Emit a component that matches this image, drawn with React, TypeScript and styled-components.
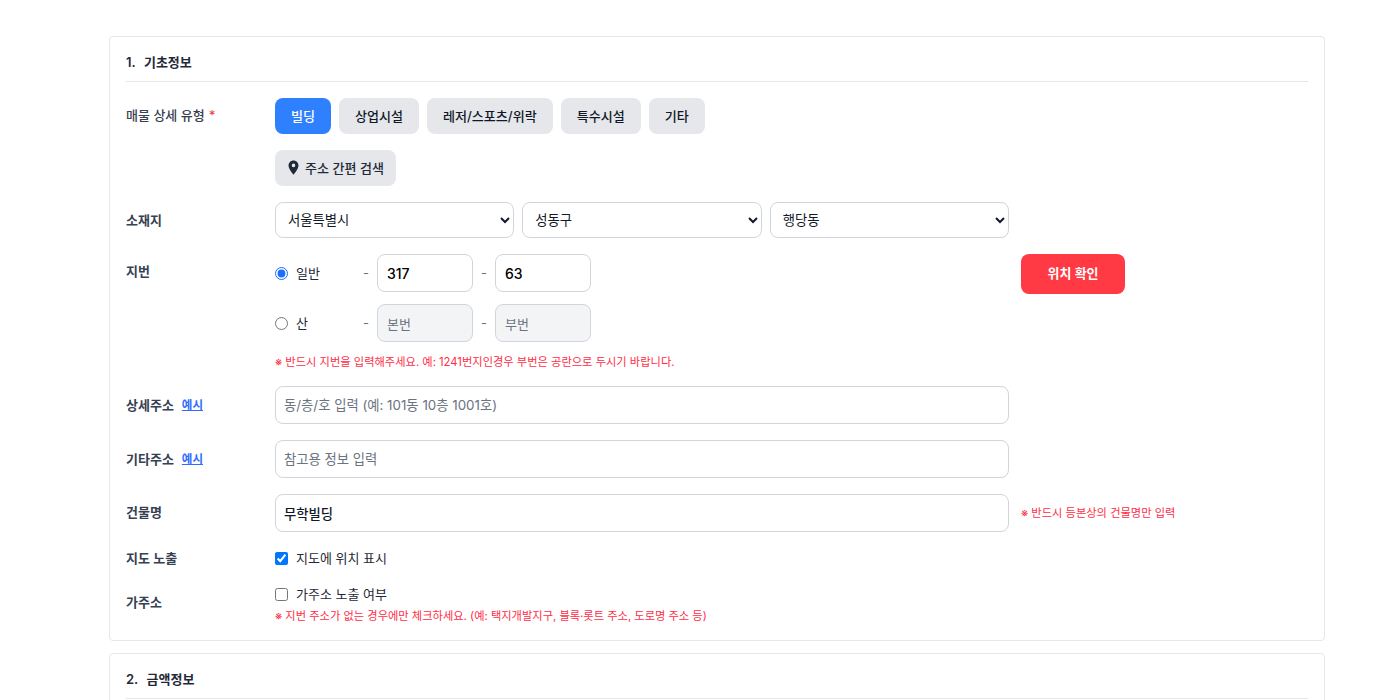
import styled, { createGlobalStyle } from 'styled-components';
import { MdLocationOn } from 'react-icons/md';

const GlobalStyle = createGlobalStyle`
    html, body {
        margin: 0;
        padding: 0;
        height: 700px;
        overflow: hidden;
        background: #fff;
    }
    * {
        box-sizing: border-box;
    }
    body, input, select, button {
        font-family: Inter, "Noto Sans CJK KR", sans-serif;
    }
`;

const Page = styled.div`
    display: flex;
    flex-direction: column;
    gap: 12px;
    padding: 36px 75px 0 109px;
`;

const Card = styled.section`
    background: #fff;
    border: 1px solid #e5e7eb;
    border-radius: 4px;
    padding: 16px;
`;

const CardTitle = styled.h2`
    margin: 0 0 16px;
    height: 29px;
    padding-bottom: 8px;
    border-bottom: 1px solid #e5e7eb;
    font-size: 13px;
    line-height: 19px;
    font-weight: 600;
    word-spacing: 1px;
    color: #1f2937;
    white-space: pre;
`;

const Rows = styled.div`
    display: flex;
    flex-direction: column;
    gap: 16px;
`;

const Row = styled.div<{ $top?: boolean }>`
    display: grid;
    grid-template-columns: 149px 734px 1fr;
    align-items: ${(p) => (p.$top ? 'start' : 'center')};
`;

const Label = styled.div<{ $top?: boolean; $light?: boolean; $raise?: number }>`
    font-size: 13px;
    line-height: 20px;
    font-weight: ${(p) => (p.$light ? 500 : 600)};
    color: #374151;
    display: flex;
    align-items: center;
    gap: 8px;
    margin-top: ${(p) => (p.$top ? '7px' : '0')};
    margin-bottom: ${(p) => p.$raise ?? 0}px;
`;

const Required = styled.span`
    color: #ef4444;
    margin-left: -4px;
`;

const Example = styled.a`
    font-size: 11.5px;
    font-weight: 600;
    color: #2f6bff;
    text-decoration: underline;
`;

const ButtonGroup = styled.div`
    display: flex;
    gap: 8px;
`;

const Chip = styled.button<{ $active?: boolean }>`
    height: 36px;
    padding: 0 16px 1px;
    border: 0;
    border-radius: 8px;
    font-size: 13.06px;
    font-weight: 500;
    display: inline-flex;
    align-items: center;
    gap: 3px;
    background: ${(p) => (p.$active ? '#2f80ff' : '#e5e7eb')};
    color: ${(p) => (p.$active ? '#fff' : '#111827')};
`;

const SearchChip = styled(Chip)`
    padding: 0 12px 1px 10px;
    color: #1f2937;
`;

const SelectGroup = styled.div`
    display: grid;
    grid-template-columns: repeat(3, 1fr);
    gap: 8px;
`;

const Select = styled.select`
    height: 36px;
    width: 100%;
    padding: 0 8px;
    border: 1px solid #d1d5db;
    border-radius: 8px;
    background: #fff;
    font-size: 13.33px;
    color: #111827;
`;

const JibunBlock = styled.div`
    display: flex;
    flex-direction: column;
    gap: 12px;
`;

const JibunLine = styled.div`
    display: flex;
    align-items: center;
    height: 38px;
`;

const RadioLabel = styled.label`
    width: 88px;
    display: flex;
    align-items: center;
    gap: 8px;
    font-size: 13px;
    line-height: 18px;
    font-weight: 400;
    color: #1f2937;
`;

const Radio = styled.input.attrs({ type: 'radio' })`
    width: 13px;
    height: 13px;
    margin: 0;
    accent-color: #1a6dff;
`;

const Dash = styled.span`
    width: 14px;
    font-size: 13px;
    color: #6b7280;
`;

const SmallInput = styled.input`
    width: 96px;
    height: 38px;
    padding: 0 8px 0 9px;
    border: 1px solid #d1d5db;
    border-radius: 8px;
    font-size: 14px;
    font-weight: 500;
    color: #000;
    background: ${(p) => (p.disabled ? '#f3f4f6' : '#fff')};
    &::placeholder {
        color: #6b7280;
        font-size: 13px;
        font-weight: 400;
        opacity: 1;
    }
`;

const SecondDash = styled(Dash)`
    margin-left: 8px;
`;

const Note = styled.p`
    margin: 0;
    font-size: 11.25px;
    line-height: 16px;
    color: #ff2d46;
`;

const SideNote = styled(Note)`
    margin-left: 12px;
`;

const TextInput = styled.input`
    width: 100%;
    height: 38px;
    padding: 0 8px;
    border: 1px solid #d1d5db;
    border-radius: 8px;
    font-size: 13.33px;
    font-weight: 500;
    color: #111827;
    &::placeholder {
        color: #6b7280;
        font-weight: 400;
        opacity: 1;
    }
`;

const ConfirmButton = styled.button`
    width: 104px;
    height: 40px;
    margin-left: 12px;
    padding: 0 0 3px;
    border: 0;
    border-radius: 8px;
    background: #ff3a44;
    color: #fff;
    font-size: 13px;
    font-weight: 600;
`;

const CheckLabel = styled.label`
    display: flex;
    align-items: center;
    gap: 8px;
    font-size: 13px;
    line-height: 20px;
    font-weight: 400;
    color: #1f2937;
`;

const Check = styled.input.attrs({ type: 'checkbox' })`
    width: 13px;
    height: 13px;
    margin: 0;
`;

const CheckStack = styled.div`
    display: flex;
    flex-direction: column;
    gap: 4px;
`;

function App() {
    return (
        <>
            <GlobalStyle />
            <Page>
                <Card>
                    <CardTitle>1.  기초정보</CardTitle>
                    <Rows>
                        <Row>
                            <Label $light $raise={2}>
                                매물 상세 유형 <Required>*</Required>
                            </Label>
                            <ButtonGroup>
                                <Chip $active>빌딩</Chip>
                                <Chip>상업시설</Chip>
                                <Chip>레저/스포츠/위락</Chip>
                                <Chip>특수시설</Chip>
                                <Chip>기타</Chip>
                            </ButtonGroup>
                        </Row>
                        <Row>
                            <span />
                            <ButtonGroup>
                                <SearchChip>
                                    <MdLocationOn size={17} color="#1f2937" />
                                    주소 간편 검색
                                </SearchChip>
                            </ButtonGroup>
                        </Row>
                        <Row>
                            <Label>소재지</Label>
                            <SelectGroup>
                                <Select defaultValue="서울특별시">
                                    <option>서울특별시</option>
                                </Select>
                                <Select defaultValue="성동구">
                                    <option>성동구</option>
                                </Select>
                                <Select defaultValue="행당동">
                                    <option>행당동</option>
                                </Select>
                            </SelectGroup>
                        </Row>
                        <Row $top>
                            <Label $top>지번</Label>
                            <JibunBlock>
                                <JibunLine>
                                    <RadioLabel>
                                        <Radio name="jibun" defaultChecked />
                                        일반
                                    </RadioLabel>
                                    <Dash>-</Dash>
                                    <SmallInput defaultValue="317" />
                                    <SecondDash>-</SecondDash>
                                    <SmallInput defaultValue="63" />
                                </JibunLine>
                                <JibunLine>
                                    <RadioLabel>
                                        <Radio name="jibun" />
                                        산
                                    </RadioLabel>
                                    <Dash>-</Dash>
                                    <SmallInput disabled placeholder="본번" />
                                    <SecondDash>-</SecondDash>
                                    <SmallInput disabled placeholder="부번" />
                                </JibunLine>
                                <Note>※ 반드시 지번을 입력해주세요. 예: 1241번지인경우 부번은 공란으로 두시기 바랍니다.</Note>
                            </JibunBlock>
                            <ConfirmButton>위치 확인</ConfirmButton>
                        </Row>
                        <Row>
                            <Label>
                                상세주소 <Example>예시</Example>
                            </Label>
                            <TextInput placeholder="동/층/호 입력 (예: 101동 10층 1001호)" />
                        </Row>
                        <Row>
                            <Label>
                                기타주소 <Example>예시</Example>
                            </Label>
                            <TextInput placeholder="참고용 정보 입력" />
                        </Row>
                        <Row>
                            <Label $raise={2}>건물명</Label>
                            <TextInput defaultValue="무학빌딩" />
                            <SideNote>※ 반드시 등본상의 건물명만 입력</SideNote>
                        </Row>
                        <Row>
                            <Label>지도 노출</Label>
                            <CheckLabel>
                                <Check defaultChecked />
                                지도에 위치 표시
                            </CheckLabel>
                        </Row>
                        <Row>
                            <Label $raise={4}>가주소</Label>
                            <CheckStack>
                                <CheckLabel>
                                    <Check />
                                    가주소 노출 여부
                                </CheckLabel>
                                <Note>※ 지번 주소가 없는 경우에만 체크하세요. (예: 택지개발지구, 블록·롯트 주소, 도로명 주소 등)</Note>
                            </CheckStack>
                        </Row>
                    </Rows>
                </Card>
                <Card>
                    <CardTitle>2.  금액정보</CardTitle>
                </Card>
            </Page>
        </>
    );
}

export default App;
